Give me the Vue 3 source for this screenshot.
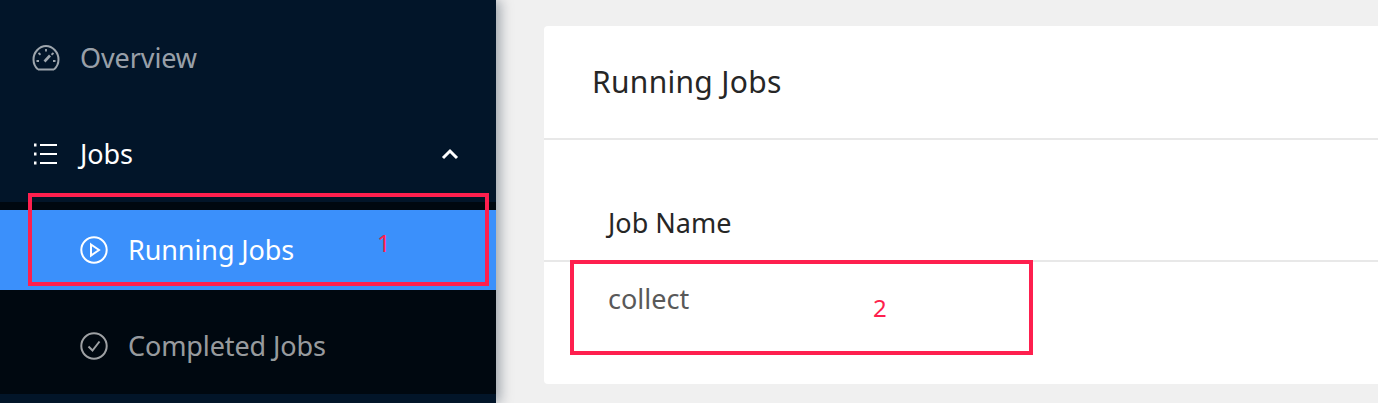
<template>
  <div class="layout">
    <aside class="sider">
      <div class="menu-item top muted">
        <svg class="icon" viewBox="0 0 28 28" fill="none" stroke="currentColor" stroke-width="2">
          <path d="M6 25.500h16M6 25.500C3.200 23 1.500 19.500 1.500 15.500 1.500 8 7.500 2 14 2s12.500 6 12.500 13.500c0 4-1.700 7.500-4.500 10" />
          <path d="M14 5v2.500M6.500 9l2 1.700M21.500 9l-2 1.700M4.500 17h2.500M21 17h2.500" stroke-width="1.800" />
          <path d="M12.500 17.500l5.500-6" stroke-width="2.600" />
        </svg>
        <span>Overview</span>
      </div>
      <div class="menu-item top open">
        <svg class="icon" viewBox="0 0 28 28" fill="none" stroke="currentColor" stroke-width="2">
          <path d="M8 5h17M8 14h17M8 23h17" />
          <path d="M2 5h2.500M2 14h2.500M2 23h2.500" stroke-width="3" />
        </svg>
        <span>Jobs</span>
        <svg class="chevron" viewBox="0 0 18 12" fill="none" stroke="currentColor" stroke-width="3">
          <path d="M2 10l7-7 7 7" />
        </svg>
      </div>
      <div class="submenu">
        <div class="menu-item sub selected">
          <svg class="icon" viewBox="0 0 28 28" fill="none" stroke="currentColor" stroke-width="2">
            <circle cx="14" cy="14" r="12.700" />
            <path d="M11 8.500l8 5.500-8 5.500z" />
          </svg>
          <span>Running Jobs</span>
        </div>
        <div class="menu-item sub muted">
          <svg class="icon" viewBox="0 0 28 28" fill="none" stroke="currentColor" stroke-width="2">
            <circle cx="14" cy="14" r="12.700" />
            <path d="M8.500 14.500l4 4 7-9" />
          </svg>
          <span>Completed Jobs</span>
        </div>
      </div>
    </aside>

    <main class="content">
      <section class="card">
        <header class="card-head">Running Jobs</header>
        <div class="card-body">
          <div class="th">Job Name</div>
          <div class="td">collect</div>
        </div>
      </section>
    </main>

    <div class="mark mark-one"><span>1</span></div>
    <div class="mark mark-two"><span>2</span></div>
  </div>
</template>

<script setup>
</script>

<style>
html, body { margin: 0; overflow: hidden; }
</style>

<style scoped>
.layout {
  position: relative;
  display: flex;
  width: 1378px;
  height: 403px;
  overflow: hidden;
  background: #f0f0f0;
  font-family: "Noto Sans", "Open Sans", sans-serif;
}
.sider {
  width: 496px;
  flex: none;
  background: #021529;
  padding-top: 18px;
  box-sizing: border-box;
  box-shadow: 4px 0 12px rgba(0, 21, 41, 0.35);
  position: relative;
  z-index: 1;
}
.menu-item {
  display: flex;
  align-items: center;
  height: 80px;
  font-size: 27px;
  letter-spacing: -0.1px;
  color: #fff;
}
.menu-item span { padding-bottom: 2px; }
.menu-item.top { padding-left: 32px; margin-bottom: 16px; }
.menu-item.sub { padding-left: 80px; }
.menu-item.sub + .menu-item.sub { margin-top: 16px; }
.menu-item.top.open { position: relative; margin-bottom: 8px; }
.muted { color: rgba(255, 255, 255, 0.62); }
.icon { width: 28px; height: 28px; flex: none; margin-right: 20px; }
.chevron { position: absolute; right: 37px; top: 34px; width: 18px; height: 12px; }
.submenu { background: #000810; padding: 8px 0; }
.selected { background: #3b90fb; }
.content { flex: 1; padding: 26px 0 0 48px; min-width: 0; }
.card {
  width: 900px;
  height: 358px;
  background: #fff;
  border-radius: 4px;
}
.card-head {
  height: 114px;
  box-sizing: border-box;
  padding: 0 48px;
  line-height: 112px;
  border-bottom: 2px solid #e8e8e8;
  font-size: 30px;
  letter-spacing: 0.3px;
  color: #262626;
}
.card-body { padding-top: 46px; }
.th {
  height: 76px;
  box-sizing: border-box;
  padding: 0 64px;
  line-height: 73px;
  border-bottom: 2px solid #e8e8e8;
  font-size: 27px;
  color: #262626;
}
.td {
  padding: 0 64px;
  line-height: 74px;
  font-size: 27px;
  color: #595959;
}
.mark {
  position: absolute;
  box-sizing: border-box;
  border: 4px solid #fe1f4e;
  color: #fe1f4e;
  z-index: 2;
  font-size: 24px;
}
.mark span { position: absolute; }
.mark-one { left: 28px; top: 193px; width: 461px; height: 93px; }
.mark-one span { left: 345px; top: 29px; }
.mark-two { left: 570px; top: 260px; width: 463px; height: 95px; }
.mark-two span { left: 299px; top: 27px; }
</style>
